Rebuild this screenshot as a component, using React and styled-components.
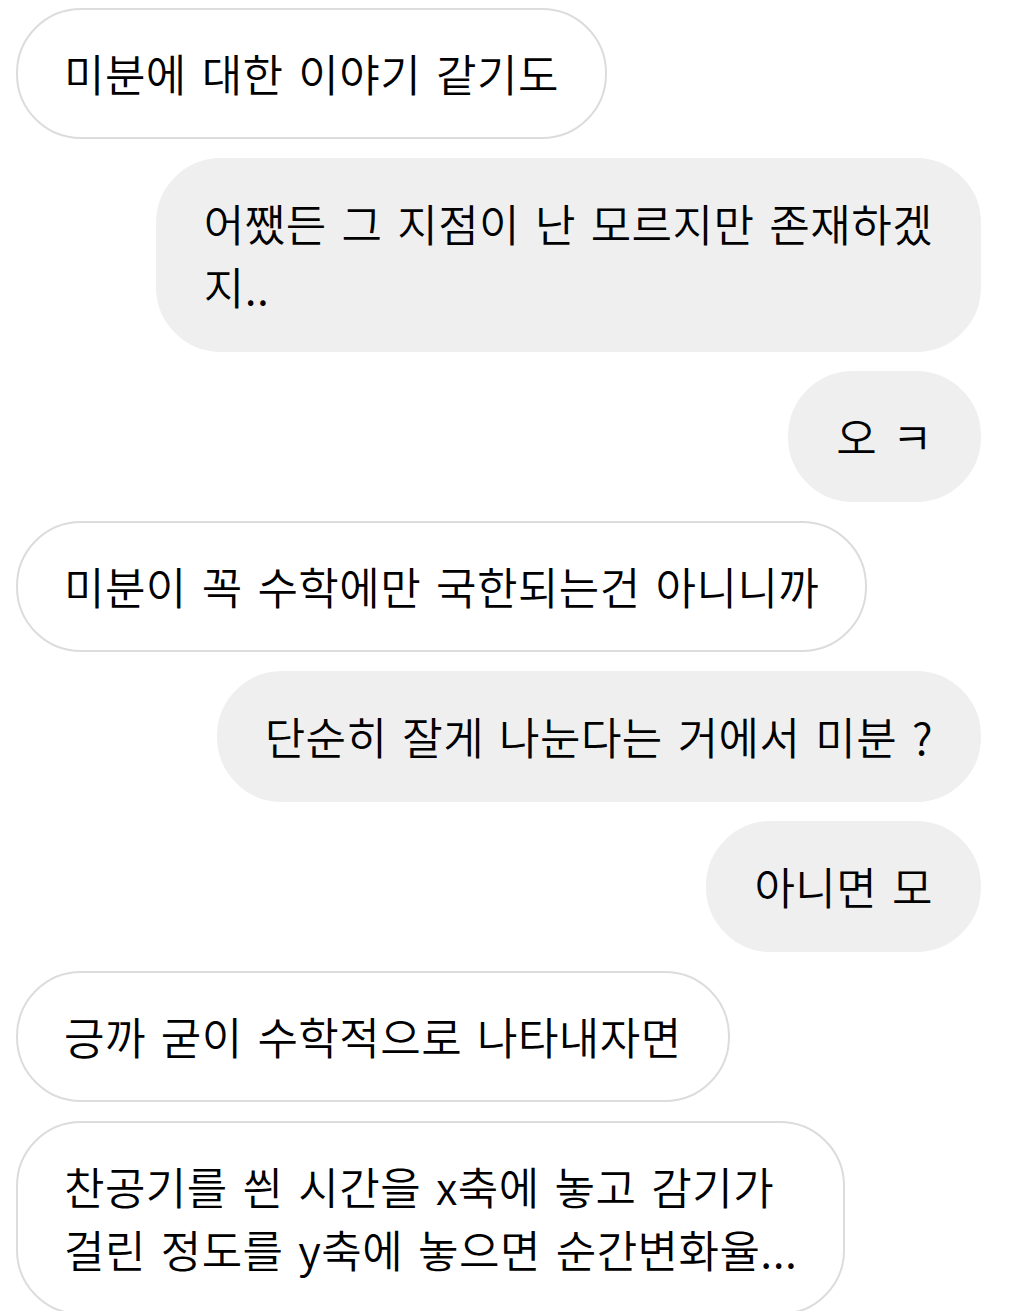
import React from "react";
import styled, { createGlobalStyle } from "styled-components";

const GlobalStyle = createGlobalStyle`
  html, body {
    margin: 0;
    padding: 0;
    background: #ffffff;
  }
  body {
    font-family: "Noto Sans CJK KR", "Noto Sans", Roboto, sans-serif;
    color: #000;
  }
`;

const Thread = styled.div`
  display: flex;
  flex-direction: column;
  gap: 19px;
  padding: 8px 36px 0 16px;
`;

const Row = styled.div`
  display: flex;
  justify-content: ${(p) => (p.$mine ? "flex-end" : "flex-start")};
`;

const Bubble = styled.div`
  box-sizing: border-box;
  padding: 32px 46px 32px 46px;
  border-radius: 65px;
  border: 2.5px solid ${(p) => (p.$mine ? "#efefef" : "#dcdcdc")};
  background: ${(p) => (p.$mine ? "#efefef" : "#ffffff")};
  font-size: 44px;
  font-weight: 350;
  line-height: 63px;
  letter-spacing: 0.45px;
  word-spacing: 4.6px;
  color: #000;
`;

const Line = styled.span`
  display: block;
  white-space: nowrap;
`;

const messages = [
  { mine: false, lines: ["미분에 대한 이야기 같기도"] },
  { mine: true, lines: ["어쨌든 그 지점이 난 모르지만 존재하겠", "지.."] },
  { mine: true, lines: ["오 ㅋ"] },
  { mine: false, lines: ["미분이 꼭 수학에만 국한되는건 아니니까"] },
  { mine: true, lines: ["단순히 잘게 나눈다는 거에서 미분 ?"] },
  { mine: true, lines: ["아니면 모"] },
  { mine: false, lines: ["긍까 굳이 수학적으로 나타내자면"] },
  {
    mine: false,
    lines: ["찬공기를 씐 시간을 x축에 놓고 감기가", "걸린 정도를 y축에 놓으면 순간변화율..."],
  },
];

export default function App() {
  return (
    <>
      <GlobalStyle />
      <Thread>
        {messages.map((m, i) => (
          <Row key={i} $mine={m.mine}>
            <Bubble $mine={m.mine}>
              {m.lines.map((l, j) => (
                <Line key={j}>{l}</Line>
              ))}
            </Bubble>
          </Row>
        ))}
      </Thread>
    </>
  );
}
